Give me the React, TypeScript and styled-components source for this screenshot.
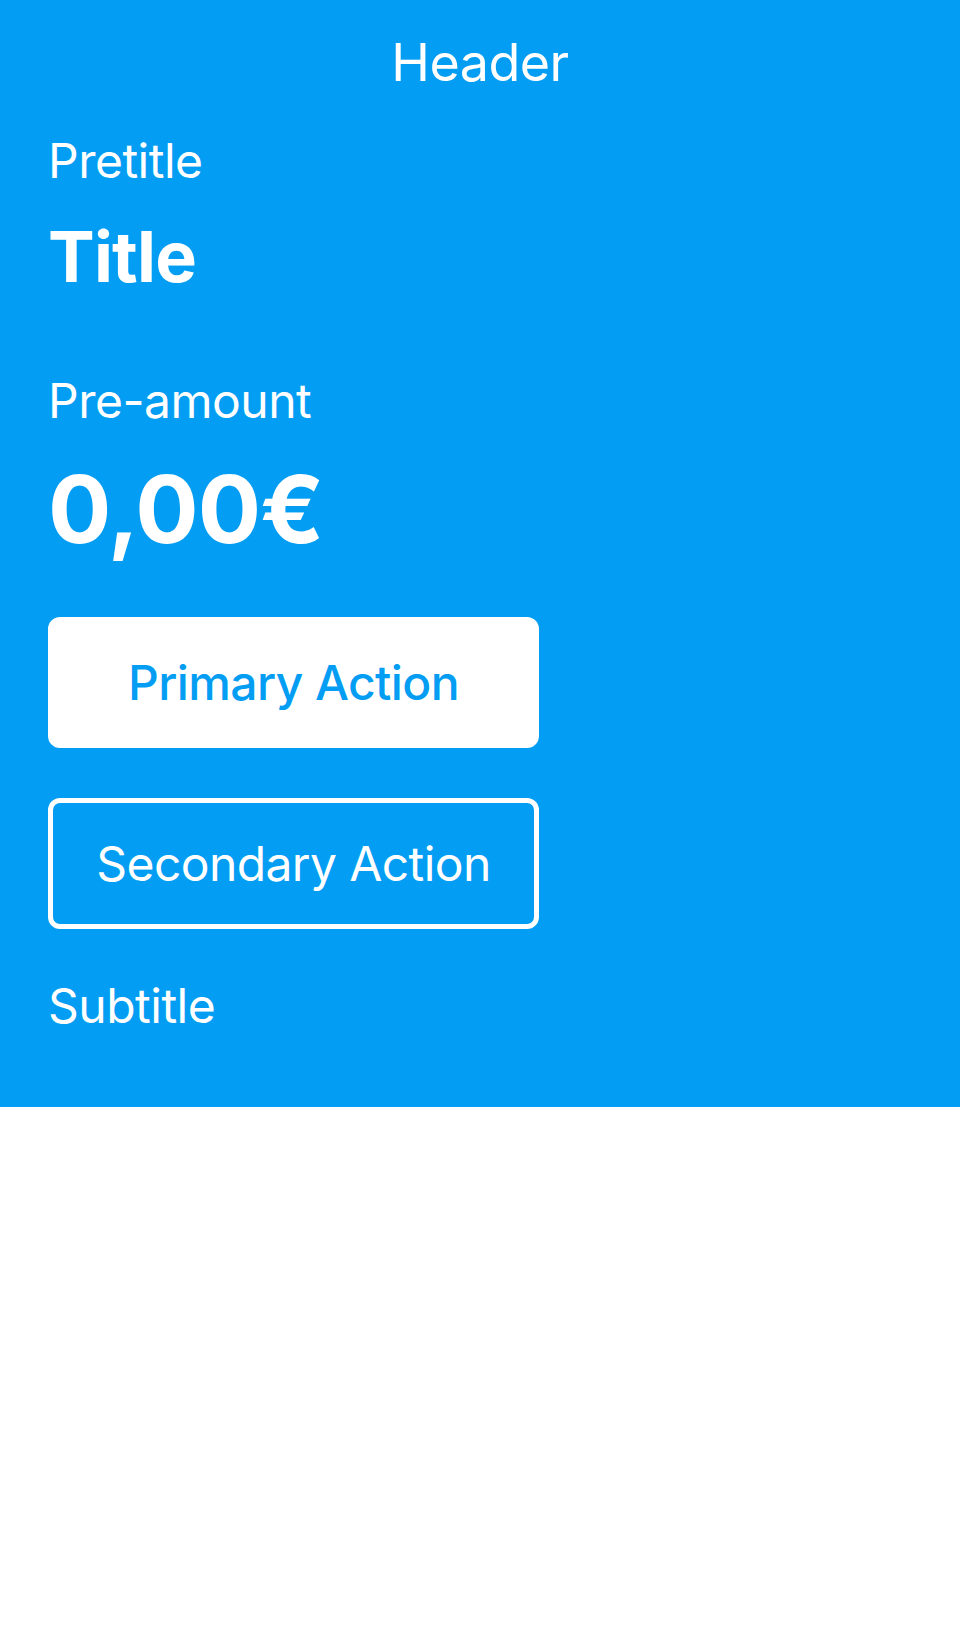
import React from "react";
import styled, { createGlobalStyle } from "styled-components";

const blue = "#039df3";

const GlobalStyle = createGlobalStyle`
  body {
    margin: 0;
    background: #ffffff;
    font-family: Inter, "Noto Sans", sans-serif;
    -webkit-font-smoothing: antialiased;
  }
`;

const Hero = styled.section`
  background-color: ${blue};
  color: #ffffff;
  padding-bottom: 77.5px;
`;

const NavBar = styled.header`
  padding-top: 37px;
  text-align: center;
  font-size: 52px;
  line-height: 52px;
  font-weight: 400;
  letter-spacing: -0.5px;
`;

const Content = styled.div`
  display: flex;
  flex-direction: column;
  align-items: flex-start;
  padding: 0 48px;
`;

const Label = styled.p<{ $top: number }>`
  margin: ${(p) => p.$top}px 0 0;
  font-size: 48px;
  line-height: 48px;
  font-weight: 400;
  letter-spacing: -0.5px;
`;

const Title = styled.h1`
  margin: 37px 0 0;
  font-size: 70px;
  line-height: 70px;
  font-weight: 700;
  letter-spacing: -0.8px;
`;

const Amount = styled.div`
  margin-top: 37px;
  font-size: 94px;
  line-height: 94px;
  font-weight: 700;
  letter-spacing: -1px;
`;

const Actions = styled.div`
  display: flex;
  flex-direction: column;
  gap: 50px;
  margin-top: 61.5px;
`;

const ActionButton = styled.button<{ $variant: "primary" | "secondary" }>`
  box-sizing: border-box;
  display: flex;
  align-items: center;
  justify-content: center;
  width: 491px;
  height: 131px;
  padding: 0;
  border-radius: 12px;
  border: 5px solid #ffffff;
  background: ${(p) => (p.$variant === "primary" ? "#ffffff" : "transparent")};
  color: ${(p) => (p.$variant === "primary" ? blue : "#ffffff")};
  font-family: inherit;
  font-size: 48px;
  line-height: 48px;
  font-weight: ${(p) => (p.$variant === "primary" ? 500 : 400)};
  letter-spacing: -0.6px;
  cursor: pointer;
`;

export default function App() {
  return (
    <>
      <GlobalStyle />
      <Hero>
        <NavBar>Header</NavBar>
        <Content>
          <Label $top={47.5}>Pretitle</Label>
          <Title>Title</Title>
          <Label $top={85}>Pre-amount</Label>
          <Amount>0,00€</Amount>
          <Actions>
            <ActionButton $variant="primary">Primary Action</ActionButton>
            <ActionButton $variant="secondary">Secondary Action</ActionButton>
          </Actions>
          <Label $top={52.5}>Subtitle</Label>
        </Content>
      </Hero>
    </>
  );
}
